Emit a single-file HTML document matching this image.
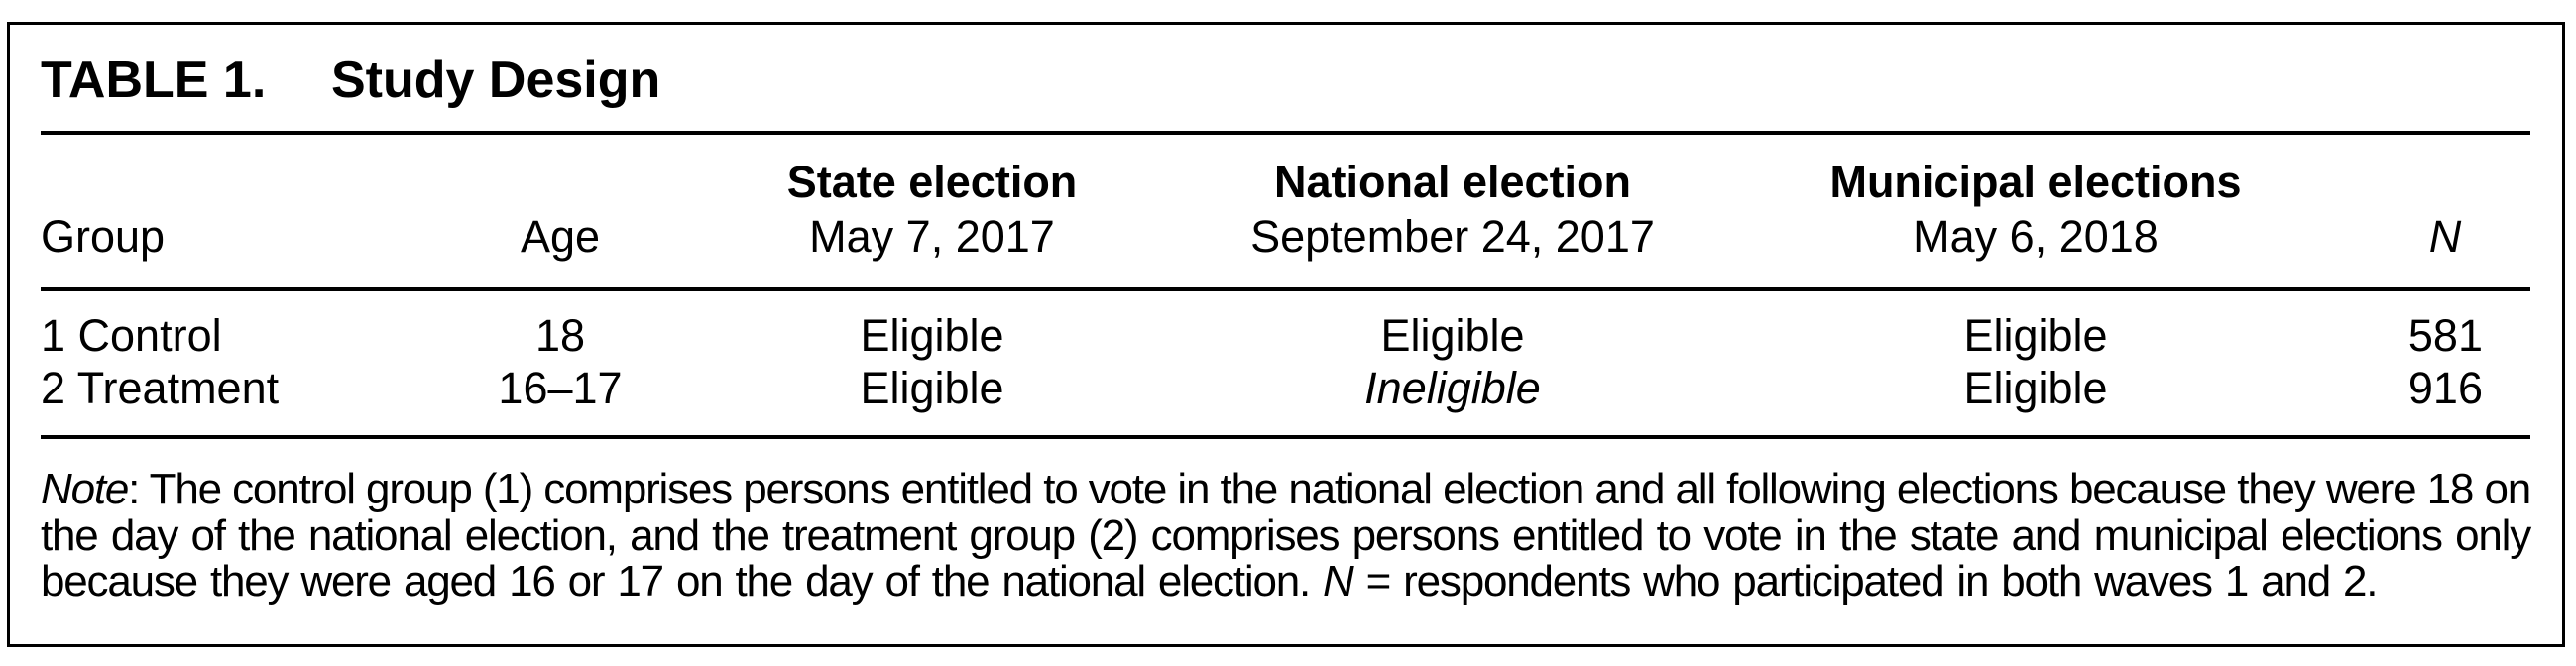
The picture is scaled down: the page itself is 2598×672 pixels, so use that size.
<!DOCTYPE html>
<html><head><meta charset="utf-8"><style>
html,body{margin:0;padding:0;background:#fff;}
body{width:2598px;height:672px;position:relative;overflow:hidden;font-family:"Liberation Sans",Arial,sans-serif;color:#000;}
.box{position:absolute;left:7px;top:22px;width:2574px;height:625px;border:3px solid #000;}
.rule{position:absolute;left:41px;width:2511px;height:4px;background:#000;}
.t{position:absolute;font-size:45px;line-height:46px;white-space:nowrap;}
.c{transform:translateX(-50%);text-align:center;}
.b{font-weight:bold;}
.note{position:absolute;left:41px;width:2511px;font-size:44px;letter-spacing:-1.2px;line-height:46px;text-align:justify;text-align-last:justify;white-space:nowrap;}
</style></head><body>
<div class="box"></div>
<div class="t b" style="left:41px;top:55px;font-size:52px;line-height:52px;">TABLE 1.</div>
<div class="t b" style="left:334px;top:55px;font-size:52px;line-height:52px;">Study Design</div>
<div class="rule" style="top:132px"></div>

<div class="t b c" style="left:940px;top:161px">State election</div>
<div class="t b c" style="left:1465px;top:161px">National election</div>
<div class="t b c" style="left:2053px;top:161px">Municipal elections</div>

<div class="t" style="left:41px;top:216px">Group</div>
<div class="t c" style="left:565px;top:216px">Age</div>
<div class="t c" style="left:940px;top:216px">May 7, 2017</div>
<div class="t c" style="left:1465px;top:216px">September 24, 2017</div>
<div class="t c" style="left:2053px;top:216px">May 6, 2018</div>
<div class="t c" style="left:2466px;top:216px;font-style:italic">N</div>
<div class="rule" style="top:290px"></div>

<div class="t" style="left:41px;top:316px">1 Control</div>
<div class="t c" style="left:565px;top:316px">18</div>
<div class="t c" style="left:940px;top:316px">Eligible</div>
<div class="t c" style="left:1465px;top:316px">Eligible</div>
<div class="t c" style="left:2053px;top:316px">Eligible</div>
<div class="t" style="right:94px;top:316px">581</div>

<div class="t" style="left:41px;top:369px">2 Treatment</div>
<div class="t c" style="left:565px;top:369px">16–17</div>
<div class="t c" style="left:940px;top:369px">Eligible</div>
<div class="t c" style="left:1465px;top:369px;font-style:italic">Ineligible</div>
<div class="t c" style="left:2053px;top:369px">Eligible</div>
<div class="t" style="right:94px;top:369px">916</div>
<div class="rule" style="top:439px"></div>

<div class="note" style="top:471px"><i>Note</i>: The control group (1) comprises persons entitled to vote in the national election and all following elections because they were 18 on</div>
<div class="note" style="top:518px">the day of the national election, and the treatment group (2) comprises persons entitled to vote in the state and municipal elections only</div>
<div class="note" style="top:564px;text-align-last:left;text-align:left;word-spacing:2px;">because they were aged 16 or 17 on the day of the national election. <i>N</i> = respondents who participated in both waves 1 and 2.</div>
</body></html>
